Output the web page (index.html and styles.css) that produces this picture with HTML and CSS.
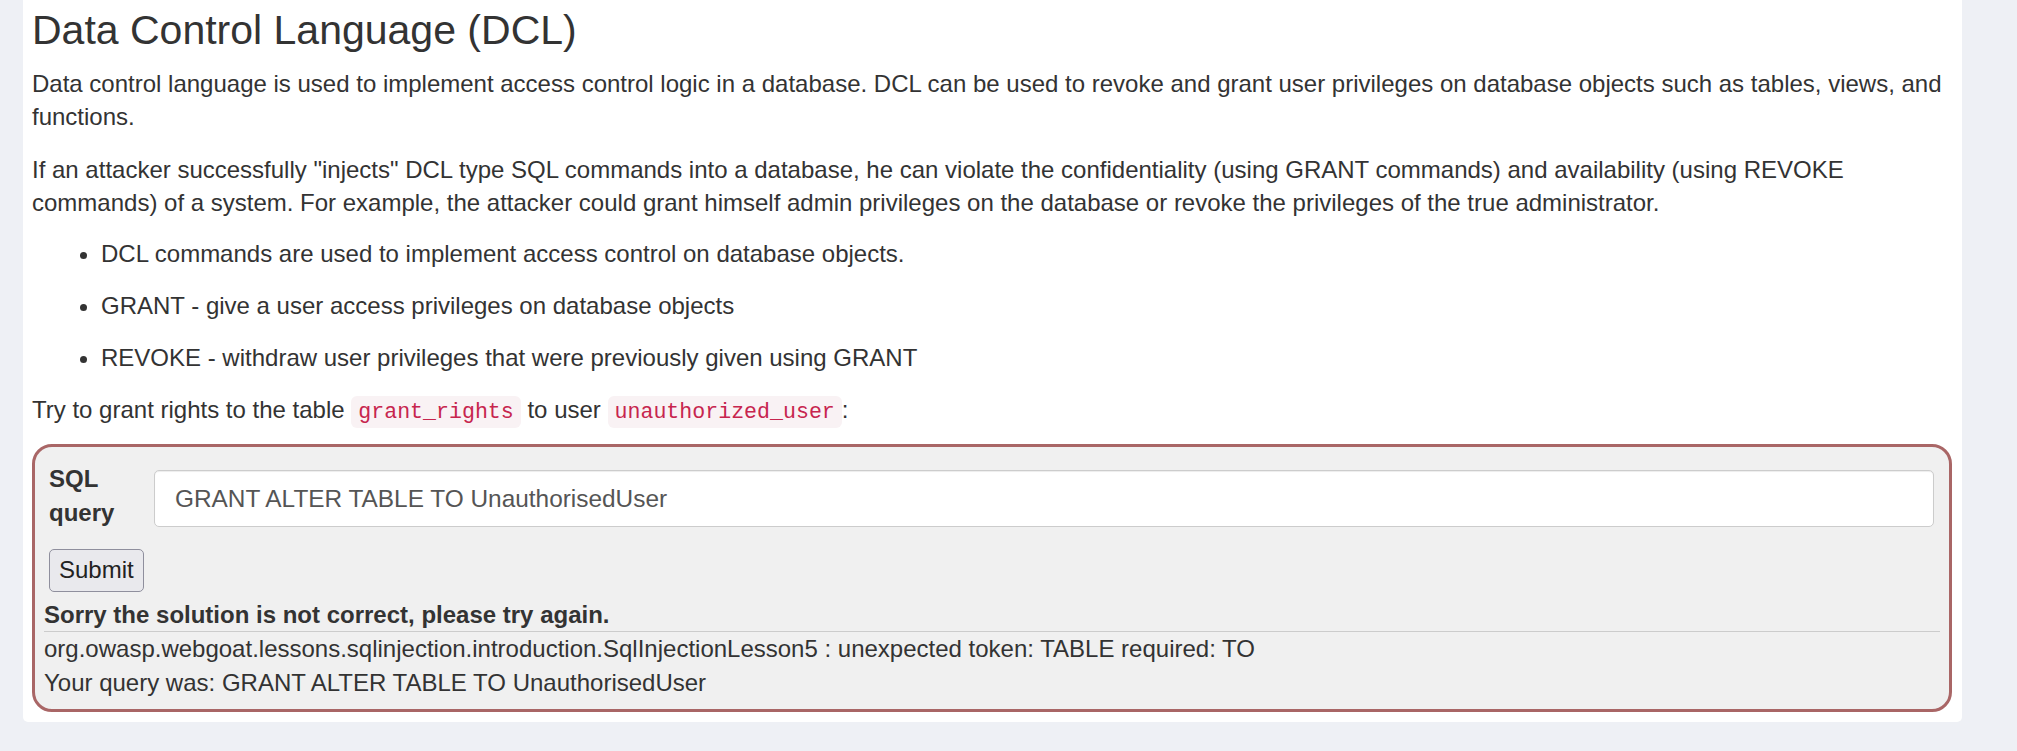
FILE: index.html
```html
<!DOCTYPE html>
<html lang="en">
<head>
<meta charset="utf-8">
<title>Data Control Language (DCL)</title>
<link rel="stylesheet" href="styles.css">
</head>
<body>
<div class="card">
  <h1 class="title">Data Control Language (DCL)</h1>
  <p>Data control language is used to implement access control logic in a database. DCL can be used to revoke and grant user privileges on database objects such as tables, views, and functions.</p>
  <p>If an attacker successfully "injects" DCL type SQL commands into a database, he can violate the confidentiality (using GRANT commands) and availability (using REVOKE commands) of a system. For example, the attacker could grant himself admin privileges on the database or revoke the privileges of the true administrator.</p>
  <ul class="bullets">
    <li><p>DCL commands are used to implement access control on database objects.</p></li>
    <li><p>GRANT - give a user access privileges on database objects</p></li>
    <li><p>REVOKE - withdraw user privileges that were previously given using GRANT</p></li>
  </ul>
  <p class="task">Try to grant rights to the table <code>grant_rights</code> to user <code>unauthorized_user</code>:</p>
  <div class="attack">
    <form class="attack-form">
      <div class="field-row">
        <label class="field-label" for="q">SQL query</label>
        <input class="field-input" id="q" type="text" value="GRANT ALTER TABLE TO UnauthorisedUser">
      </div>
      <button class="submit" type="button">Submit</button>
    </form>
    <div class="feedback">
      <div class="feedback-title">Sorry the solution is not correct, please try again.</div>
      <hr class="feedback-rule">
      <div class="feedback-output">org.owasp.webgoat.lessons.sqlinjection.introduction.SqlInjectionLesson5 : unexpected token: TABLE required: TO<br>Your query was: GRANT ALTER TABLE TO UnauthorisedUser</div>
    </div>
  </div>
</div>
</body>
</html>
```

FILE: styles.css
```css
html, body {
  margin: 0;
  padding: 0;
}
body {
  background: #eef0f5;
  color: #333333;
  font-family: "Liberation Sans", Arial, sans-serif;
  font-size: 24px;
  line-height: 33.4px;
  height: 751px;
  overflow: hidden;
}
.card {
  margin-left: 23px;
  width: 1939px;
  box-sizing: border-box;
  background: #ffffff;
  padding: 8px 10px 10px 9px;
  border-radius: 0 0 5px 5px;
}
.title {
  margin: 0 0 13.7px 0;
  font-size: 41px;
  line-height: 45px;
  font-weight: normal;
}
p {
  margin: 0 0 19px 0;
}
.bullets {
  margin: -1px 0 0 0;
  padding-left: 69px;
}
.bullets li p {
  margin: 0 0 18.4px 0;
}
.task {
  margin-bottom: 15px;
}
code {
  font-family: "Liberation Mono", "Courier New", monospace;
  font-size: 21.6px;
  color: #c7254e;
  background: #f9f2f4;
  padding: 4px 7px;
  border-radius: 6px;
}
.attack {
  border: 3px solid #a96666;
  border-radius: 20px;
  background: #f0f0f0;
}
.attack-form {
  padding: 15px 15px 0 14px;
}
.field-row {
  display: grid;
  grid-template-columns: 105px 1fr;
  align-items: start;
}
.field-label {
  font-weight: bold;
  width: 72px;
}
.field-input {
  margin-top: 8px;
  height: 57px;
  box-sizing: border-box;
  border: 1px solid #cccccc;
  border-radius: 5px;
  background: #ffffff;
  padding: 0 20px;
  font-family: "Liberation Sans", Arial, sans-serif;
  font-size: 24.4px;
  color: #555555;
  box-shadow: inset 0 1px 1px rgba(0,0,0,0.075);
  outline: none;
}
.submit {
  margin-top: 20px;
  height: 43px;
  padding: 0 9px;
  font-family: "Liberation Sans", Arial, sans-serif;
  font-size: 24px;
  color: #222222;
  background: #e9e9ed;
  border: 1px solid #8f8f9d;
  border-radius: 5px;
}
.feedback {
  padding: 6px 9px 10px 9px;
}
.feedback-title {
  font-weight: bold;
}
.feedback-rule {
  margin: 0;
  border: 0;
  border-top: 1px solid #cccccc;
  height: 0;
}
```
